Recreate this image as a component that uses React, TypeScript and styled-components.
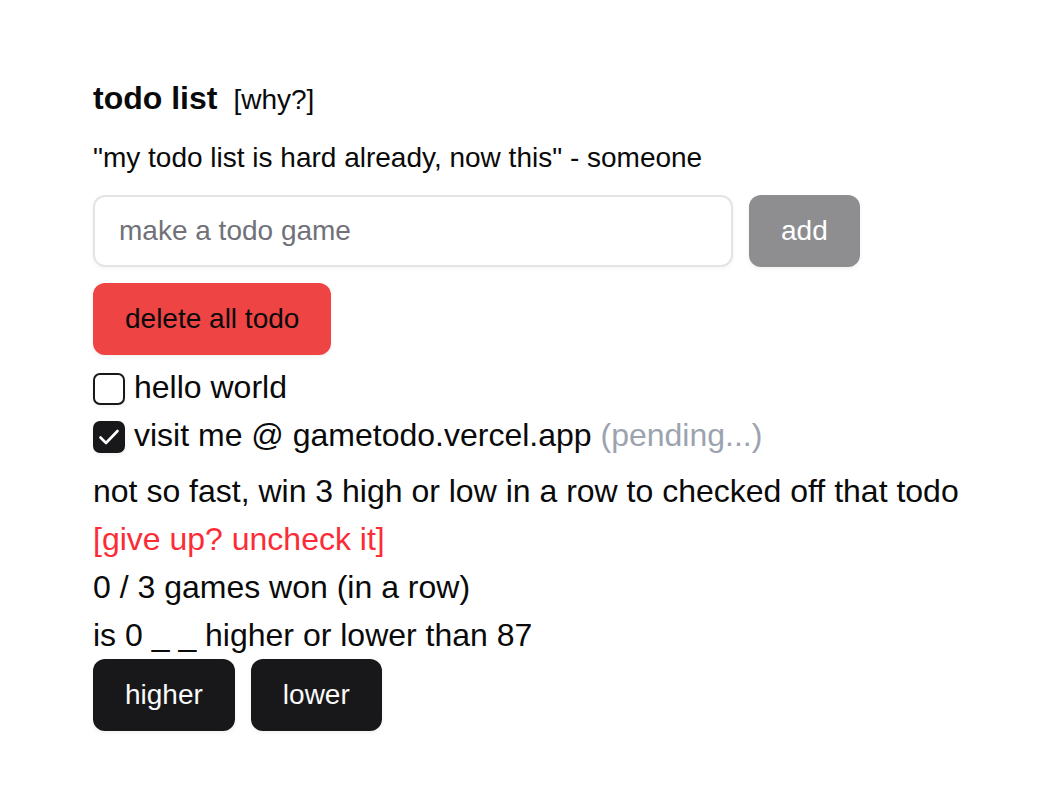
import styled, { createGlobalStyle } from "styled-components"

const GlobalStyle = createGlobalStyle`
	html, body {
		margin: 0;
		padding: 0;
		background: #ffffff;
	}
	body {
		font-family: "Liberation Sans", Arial, Helvetica, sans-serif;
		color: #0a0a0a;
	}
	* {
		box-sizing: border-box;
	}
`

const todos = [
	{ id: 1, text: "hello world", done: false, pending: false },
	{ id: 2, text: "visit me @ gametodo.vercel.app", done: true, pending: true }
]

const App = () => {
	return (
		<Page>
			<GlobalStyle />
			<Header>
				<Title>todo list</Title>
				<WhyLink>[why?]</WhyLink>
			</Header>
			<Quote>"my todo list is hard already, now this" - someone</Quote>

			<AddForm onSubmit={(e) => e.preventDefault()}>
				<TodoInput placeholder="make a todo game" />
				<Button $variant="muted" type="submit">
					add
				</Button>
			</AddForm>

			<DeleteRow>
				<Button $variant="danger">delete all todo</Button>
			</DeleteRow>

			<TodoList>
				{todos.map((todo) => (
					<TodoRow key={todo.id}>
						<Checkbox $checked={todo.done}>
							{todo.done && (
								<svg width="32" height="32" viewBox="0 0 32 32" fill="none">
									<path
										d="M7.5 16.5l5.5 5.5 11.5-12"
										stroke="#ffffff"
										strokeWidth="2.6"
										strokeLinecap="round"
										strokeLinejoin="round"
									/>
								</svg>
							)}
						</Checkbox>
						<span>
							{todo.text}
							{todo.pending && <Pending> (pending...)</Pending>}
						</span>
					</TodoRow>
				))}
			</TodoList>

			<Game>
				<GameLine>not so fast, win 3 high or low in a row to checked off that todo</GameLine>
				<GiveUp>[give up? uncheck it]</GiveUp>
				<GameLine>0 / 3 games won (in a row)</GameLine>
				<GameLine>is 0 _ _ higher or lower than 87</GameLine>
				<ChoiceRow>
					<Button $variant="dark">higher</Button>
					<Button $variant="dark">lower</Button>
				</ChoiceRow>
			</Game>
		</Page>
	)
}

export default App

// Styled Components

const Page = styled.main`
	padding: 74px 93px 40px;
`

const Header = styled.div`
	display: flex;
	align-items: baseline;
	gap: 16px;
	height: 48px;
`

const Title = styled.h1`
	margin: 0;
	font-size: 32px;
	line-height: 48px;
	font-weight: 700;
`

const WhyLink = styled.span`
	font-size: 28px;
	line-height: 40px;
	cursor: pointer;
`

const Quote = styled.p`
	margin: 16px 0 0;
	font-size: 28px;
	line-height: 40px;
`

const AddForm = styled.form`
	display: flex;
	gap: 16px;
	margin-top: 17px;
`

const TodoInput = styled.input`
	width: 640px;
	height: 72px;
	padding: 0 24px;
	border: 2px solid #e4e4e7;
	border-radius: 12px;
	font-family: inherit;
	font-size: 28px;
	color: #0a0a0a;
	box-shadow: 0 2px 4px rgba(0, 0, 0, 0.04);
	outline: none;

	&::placeholder {
		color: #71717a;
	}
`

const variants = {
	muted: { bg: "#8e8e91", fg: "#ffffff" },
	danger: { bg: "#ef4444", fg: "#0a0a0a" },
	dark: { bg: "#18181b", fg: "#fafafa" }
}

const Button = styled.button<{ $variant: keyof typeof variants }>`
	display: inline-flex;
	align-items: center;
	justify-content: center;
	height: 72px;
	padding: 0 32px;
	border: none;
	border-radius: 12px;
	font-family: inherit;
	font-size: 28px;
	line-height: 40px;
	background: ${({ $variant }) => variants[$variant].bg};
	color: ${({ $variant }) => variants[$variant].fg};
	box-shadow: 0 2px 4px rgba(0, 0, 0, 0.06);
	cursor: pointer;
`

const DeleteRow = styled.div`
	margin-top: 16px;
`

const TodoList = styled.ul`
	list-style: none;
	margin: 8px 0 0;
	padding: 0;
`

const TodoRow = styled.li`
	display: flex;
	align-items: center;
	gap: 9px;
	height: 48px;
	font-size: 32px;
	line-height: 48px;
`

const Checkbox = styled.span<{ $checked: boolean }>`
	display: inline-flex;
	align-items: center;
	justify-content: center;
	flex: none;
	width: 32px;
	height: 32px;
	margin-top: 3px;
	border: 2px solid #18181b;
	border-radius: 7px;
	background: ${({ $checked }) => ($checked ? "#18181b" : "#ffffff")};
	box-shadow: 0 2px 4px rgba(0, 0, 0, 0.06);

	svg {
		margin: -2px;
	}
`

const Pending = styled.span`
	color: #9ca3af;
`

const Game = styled.section`
	margin-top: 8px;
	font-size: 32px;
	line-height: 48px;
`

const GameLine = styled.p`
	margin: 0;
`

const GiveUp = styled.p`
	margin: 0;
	color: #fb2c36;
	cursor: pointer;
`

const ChoiceRow = styled.div`
	display: flex;
	gap: 16px;
`
